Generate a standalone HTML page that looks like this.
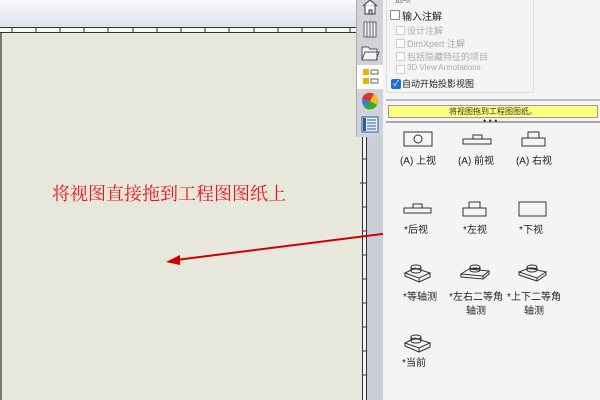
<!DOCTYPE html>
<html><head><meta charset="utf-8"><style>
*{margin:0;padding:0;box-sizing:border-box}
body{width:600px;height:400px;overflow:hidden;position:relative;background:#f4f4f4;font-family:"Liberation Sans","Noto Sans CJK SC",sans-serif}
.a{position:absolute}
.cb{position:absolute;width:9px;height:9px;border:1px solid #888;background:#fff;border-radius:1px}
.cb.d{border-color:#ccc}
.t{position:absolute;font-size:9px;color:#222;white-space:nowrap}
.g{color:#aaa}
.lbl{position:absolute;font-size:10px;color:#222;text-align:center;width:70px;line-height:14px}
</style></head><body>
<div class="a" style="left:0;top:0;width:362px;height:28px;background:linear-gradient(#f7f8fb,#dde2ea)"></div>
<div class="a" style="left:0;top:27px;width:362px;height:6px;background:#f6f6f2;border-top:1px solid #333;border-bottom:1px solid #333"></div>
<svg class="a" style="left:0;top:27px" width="362" height="8">
<g stroke="#333" stroke-width="1">
<line x1="12" y1="0" x2="12" y2="6"/><line x1="36" y1="0" x2="36" y2="6"/><line x1="60" y1="0" x2="60" y2="6"/><line x1="84" y1="0" x2="84" y2="8"/><line x1="108" y1="0" x2="108" y2="6"/><line x1="133" y1="0" x2="133" y2="6"/><line x1="157" y1="0" x2="157" y2="6"/><line x1="181" y1="0" x2="181" y2="6"/><line x1="205" y1="0" x2="205" y2="6"/><line x1="229" y1="0" x2="229" y2="6"/><line x1="254" y1="0" x2="254" y2="6"/><line x1="278" y1="0" x2="278" y2="6"/><line x1="302" y1="0" x2="302" y2="6"/><line x1="326" y1="0" x2="326" y2="6"/><line x1="350" y1="0" x2="350" y2="6"/>
</g></svg>
<div class="a" style="left:0;top:33px;width:362px;height:367px;background:#e7e7dc;border-left:2px solid #777"></div>
<div class="a" style="left:362px;top:33px;width:5px;height:367px;background:#f4f4ef;border-left:1px solid #333;border-right:1px solid #333"></div>
<svg class="a" style="left:360px;top:33px" width="8" height="367"><g stroke="#333">
<line x1="2" y1="30" x2="8" y2="30"/><line x1="2" y1="54" x2="8" y2="54"/><line x1="2" y1="78" x2="8" y2="78"/><line x1="2" y1="102" x2="8" y2="102"/><line x1="2" y1="126" x2="8" y2="126"/><line x1="0" y1="150" x2="8" y2="150"/><line x1="2" y1="174" x2="8" y2="174"/><line x1="2" y1="198" x2="8" y2="198"/><line x1="2" y1="222" x2="8" y2="222"/><line x1="2" y1="246" x2="8" y2="246"/><line x1="2" y1="270" x2="8" y2="270"/><line x1="2" y1="294" x2="8" y2="294"/><line x1="2" y1="318" x2="8" y2="318"/><line x1="2" y1="342" x2="8" y2="342"/></g></svg>
<div class="a" style="left:367px;top:130px;width:16px;height:270px;background:#c9ced8"></div>
<div class="a" style="left:52px;top:180px;font-size:18px;color:#e8141e;font-family:'Liberation Serif','Noto Serif CJK SC',serif">将视图直接拖到工程图图纸上</div>
<svg class="a" style="left:160px;top:225px" width="240" height="45"><line x1="230" y1="8" x2="16" y2="35" stroke="#c00" stroke-width="2"/><polygon points="6,37 20,30 20,40" fill="#c00"/></svg>
<div class="a" style="left:356px;top:0;width:27px;height:137px;background:#cfd2d8;border-left:1px solid #aaa"></div>
<div class="a" style="left:357px;top:65px;width:26px;height:24px;background:#fff"></div>
<svg class="a" style="left:357px;top:0" width="26" height="137">
<path d="M6 6 L13 0 L20 6 M8 5 V14 H18 V5 M12 14 V10 H15 V14" stroke="#555" fill="#fff" stroke-width="1.2"/>
<path d="M7 22 h12 v15 h-12z M10 22 v15 M13 22 v15 M16 22 v15" stroke="#666" fill="#eee"/>
<path d="M5 47 h6 l2 2 h7 v11 h-15z M5 60 l3 -8 h14 l-3 8" stroke="#555" fill="#f4f4f4"/>
<rect x="6" y="69" width="6" height="6" fill="#e5b400"/><rect x="6" y="78" width="6" height="6" fill="#e5b400"/><rect x="14" y="70" width="7" height="4" fill="none" stroke="#666"/><rect x="14" y="79" width="7" height="4" fill="none" stroke="#666"/>
<circle cx="13" cy="101" r="8" fill="#3a7ad8"/><path d="M13 101 L5 99 A8 8 0 0 1 17 94Z" fill="#d33"/><path d="M13 101 L17 94 A8 8 0 0 1 20 105Z" fill="#f0c020"/><path d="M13 101 L20 105 A8 8 0 0 1 7 107Z" fill="#3a3"/>
<rect x="5" y="117" width="16" height="15" fill="#e8f0fa" stroke="#2a5c9c"/><g stroke="#2a5c9c"><line x1="10" y1="120" x2="19" y2="120"/><line x1="10" y1="123" x2="19" y2="123"/><line x1="10" y1="126" x2="19" y2="126"/><line x1="10" y1="129" x2="19" y2="129"/></g><rect x="6" y="118" width="3" height="13" fill="#2a5c9c"/>
</svg>
<div class="a" style="left:383px;top:0;width:217px;height:400px;background:#f4f4f4"></div>
<div class="a" style="left:386px;top:-5px;width:148px;height:98px;border:1px solid #ddd;border-radius:2px"></div>
<div class="t" style="left:395px;top:-6px;color:#666;font-size:8px">选项</div>
<div class="cb" style="left:390px;top:10px;width:10px;height:10px"></div><div class="t" style="left:402px;top:8px;font-size:10px">输入注解</div>
<div class="cb d" style="left:396px;top:26px"></div><div class="t g" style="left:407px;top:24px">设计注解</div>
<div class="cb d" style="left:396px;top:39px"></div><div class="t g" style="left:407px;top:37px">DimXpert 注解</div>
<div class="cb d" style="left:396px;top:52px"></div><div class="t g" style="left:407px;top:50px">包括隐藏特征的项目</div>
<div class="cb d" style="left:396px;top:65px"></div><div class="t g" style="left:407px;top:63px;font-size:8px">3D View Annotations</div>
<div class="a" style="left:391px;top:79px;width:10px;height:10px;background:#1f6fd0;border-radius:2px;color:#fff;font-size:8px;line-height:10px;text-align:center">✓</div><div class="t" style="left:402px;top:77px">自动开始投影视图</div>
<div class="a" style="left:386px;top:99px;width:214px;height:2px;background:#bbb"></div>
<div class="a" style="left:388px;top:105px;width:210px;height:13px;background:#ffff80;border:1px solid #999;font-size:8px;text-align:center;line-height:11px;color:#333">将视图拖到工程图图纸。</div>
<div class="a" style="left:386px;top:121px;width:214px;height:2px;background:#aaa"></div>
<div class="a" style="left:483px;top:119px;font-size:9px;line-height:4px;color:#333">• • •</div>
<svg class="a" style="left:383px;top:125px" width="217" height="250" fill="none" stroke="#333" stroke-width="1">
<rect x="21" y="7" width="28" height="14"/><circle cx="35" cy="14" r="4"/>
<rect x="80" y="14" width="28" height="5"/><rect x="90" y="10" width="9" height="4"/>
<rect x="139" y="13" width="23" height="8"/><rect x="145" y="7" width="11" height="6"/>
<rect x="21" y="83" width="27" height="5"/><rect x="30" y="79" width="9" height="4"/>
<rect x="80" y="83" width="23" height="8"/><rect x="86" y="77" width="11" height="6"/>
<rect x="136" y="77" width="27" height="14"/>
<g transform="translate(22,140)"><path d="M0 8 L10 3 L25 8 L14 13Z M0 8 v3 L14 17 v-4 M14 17 L25 12 v-4"/><ellipse cx="11" cy="6" rx="5" ry="2"/><path d="M6 6 v-4 M16 6 v-4"/><ellipse cx="11" cy="2" rx="5" ry="2"/></g>
<g transform="translate(78,140)"><path d="M0 9 L8 4 L28 6 L22 11Z M0 9 v3 L22 14 v-3 M22 14 L28 9 v-3"/><ellipse cx="14" cy="5" rx="5" ry="2"/><path d="M9 5 v-3 M19 5 v-3"/><ellipse cx="14" cy="2" rx="5" ry="2"/></g>
<g transform="translate(136,140)"><path d="M0 7 L10 3 L27 7 L18 13Z M0 7 v3 L18 16 v-3 M18 16 L27 10 v-3"/><ellipse cx="13" cy="5" rx="5" ry="2"/><path d="M8 5 v-3 M18 5 v-3"/><ellipse cx="13" cy="2" rx="5" ry="2"/></g>
<g transform="translate(22,210)"><path d="M0 8 L10 3 L25 8 L14 13Z M0 8 v3 L14 17 v-4 M14 17 L25 12 v-4"/><ellipse cx="11" cy="6" rx="5" ry="2"/><path d="M6 6 v-4 M16 6 v-4"/><ellipse cx="11" cy="2" rx="5" ry="2"/></g>
</svg>
<div class="lbl" style="left:383px;top:155px">(A) 上视</div>
<div class="lbl" style="left:441px;top:155px">(A) 前视</div>
<div class="lbl" style="left:499px;top:155px">(A) 右视</div>
<div class="lbl" style="left:381px;top:224px">*后视</div>
<div class="lbl" style="left:440px;top:224px">*左视</div>
<div class="lbl" style="left:496px;top:224px">*下视</div>
<div class="lbl" style="left:385px;top:291px">*等轴测</div>
<div class="lbl" style="left:441px;top:291px">*左右二等角<br>轴测</div>
<div class="lbl" style="left:499px;top:291px">*上下二等角<br>轴测</div>
<div class="lbl" style="left:379px;top:357px">*当前</div>
</body></html>
